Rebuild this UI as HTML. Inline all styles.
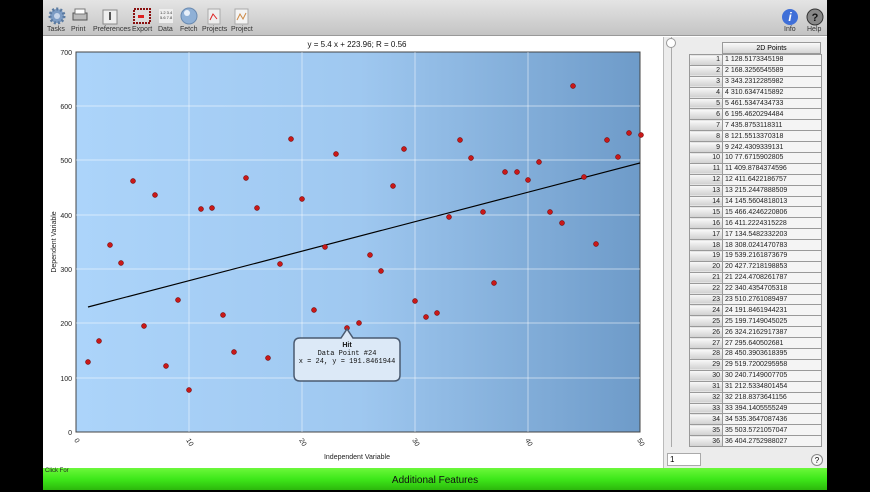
<!DOCTYPE html>
<html><head><meta charset="utf-8"><style>
*{margin:0;padding:0;box-sizing:border-box}
body{width:870px;height:490px;background:#000;position:relative;overflow:hidden;font-family:"Liberation Sans",sans-serif}
#win{position:absolute;left:43px;top:0;width:784px;height:490px;background:#fff}
#tb{position:absolute;left:0;top:0;width:784px;height:36px;background:linear-gradient(#e4e4e4,#c4c4c4);border-bottom:1px solid #999}
.ti{position:absolute;top:26px;font-size:7px;color:#333;text-align:center}
#side{position:absolute;top:37px;width:164px;height:431px;background:#ececec;border-left:1px solid #bbb}
#green{position:absolute;top:468px;width:784px;height:22px;background:linear-gradient(#6cf83a,#3ee81a 50%,#2cb80c)}
table{position:absolute;left:689px;top:54px;border-collapse:collapse;font-size:7px;color:#222;table-layout:fixed;width:132px}
td{height:10.9px;padding:0 2px;line-height:9px;white-space:nowrap;overflow:hidden}
td.i{width:33px;text-align:right;background:linear-gradient(#fafafa,#cfcfcf);border:1px solid #999;border-radius:2px}
td.v{width:99px;background:#f4f4f4;border:1px solid #999}
</style></head><body>
<div id="win">
<div id="tb">
<svg width="300" height="26" style="position:absolute;left:0;top:0">
<circle cx="14" cy="16" r="7" fill="#7d9cc4" stroke="#5b7aa0" stroke-width="3" stroke-dasharray="2 2"/><circle cx="14" cy="16" r="3" fill="#c8d6ea"/>
<rect x="30" y="13" width="14" height="7" fill="#bbb" stroke="#555"/><rect x="32" y="9" width="10" height="5" fill="#fff" stroke="#777"/>
<rect x="60" y="10" width="14" height="14" fill="#eee" stroke="#888"/><rect x="66" y="12" width="2" height="8" fill="#555"/>
<rect x="91" y="9" width="16" height="14" fill="#ddd" stroke="#8a1010" stroke-width="2" stroke-dasharray="2 1"/><rect x="95" y="15" width="6" height="3" fill="#d22"/>
<rect x="116" y="9" width="14" height="14" fill="#eee"/><text x="117" y="14" font-size="4" fill="#333">1.2 3.4</text><text x="117" y="19" font-size="4" fill="#333">5.6 7.8</text>
<circle cx="146" cy="16" r="8" fill="#8fb0d6" stroke="#6a8ab0"/><circle cx="144" cy="13" r="3" fill="#e8f0fa"/>
<rect x="165" y="9" width="12" height="15" fill="#eee" stroke="#aaa"/><path d="M167 20 L170 14 L174 19" stroke="#d22" fill="none"/>
<rect x="192" y="9" width="13" height="15" fill="#f4f4f4" stroke="#aaa"/><path d="M194 20 L197 14 L200 19 L203 13" stroke="#c84" fill="none"/>
</svg>
<div class="ti" style="left:4px">Tasks</div><div class="ti" style="left:28px">Print</div><div class="ti" style="left:50px">Preferences</div><div class="ti" style="left:89px">Export</div><div class="ti" style="left:115px">Data</div><div class="ti" style="left:137px">Fetch</div><div class="ti" style="left:159px">Projects</div><div class="ti" style="left:188px">Project</div>
<svg width="50" height="26" style="position:absolute;left:736px;top:0"><circle cx="11" cy="17" r="8" fill="#3f6fd8"/><text x="11" y="21" font-size="12" font-style="italic" font-weight="bold" fill="#fff" text-anchor="middle">i</text><circle cx="36" cy="17" r="8" fill="#888" stroke="#333"/><text x="36" y="21" font-size="11" font-weight="bold" fill="#111" text-anchor="middle">?</text></svg>
<div class="ti" style="left:741px">Info</div><div class="ti" style="left:764px">Help</div>
</div>
</div>
<svg width="660" height="468" style="position:absolute;left:0;top:0;font-family:'Liberation Sans',sans-serif">
<defs><linearGradient id="g" x1="0" x2="1"><stop offset="0" stop-color="#acd4fa"/><stop offset="0.5" stop-color="#9fc8f0"/><stop offset="1" stop-color="#6e9bc9"/></linearGradient></defs>
<rect x="76" y="52" width="564" height="380" fill="url(#g)" stroke="#444"/>
<g stroke="#fff" stroke-opacity="0.7" stroke-width="0.7">
<line x1="189" y1="52" x2="189" y2="432"/><line x1="302" y1="52" x2="302" y2="432"/><line x1="415" y1="52" x2="415" y2="432"/><line x1="528" y1="52" x2="528" y2="432"/>
<line x1="76" y1="106" x2="640" y2="106"/><line x1="76" y1="160" x2="640" y2="160"/><line x1="76" y1="215" x2="640" y2="215"/><line x1="76" y1="269" x2="640" y2="269"/><line x1="76" y1="323" x2="640" y2="323"/><line x1="76" y1="378" x2="640" y2="378"/></g>
<text x="357" y="47" font-size="8" text-anchor="middle" fill="#111">y = 5.4 x + 223.96; R = 0.56</text>
<g font-size="7" fill="#222" text-anchor="end"><text x="72" y="55">700</text><text x="72" y="109">600</text><text x="72" y="163">500</text><text x="72" y="218">400</text><text x="72" y="272">300</text><text x="72" y="326">200</text><text x="72" y="381">100</text><text x="72" y="435">0</text></g>
<g font-size="7" fill="#222"><text transform="translate(74,440) rotate(60)">0</text><text transform="translate(186,440) rotate(60)">10</text><text transform="translate(299,440) rotate(60)">20</text><text transform="translate(412,440) rotate(60)">30</text><text transform="translate(525,440) rotate(60)">40</text><text transform="translate(637,440) rotate(60)">50</text></g>
<text x="357" y="459" font-size="7" text-anchor="middle" fill="#222">Independent Variable</text>
<text transform="translate(56,242) rotate(-90)" font-size="7" text-anchor="middle" fill="#222">Dependent Variable</text>
<line x1="88" y1="307" x2="640" y2="163" stroke="#000" stroke-width="1.2"/>
<g fill="#c81818" stroke="#600" stroke-width="0.5">
<circle cx="88" cy="362" r="2.5"/><circle cx="99" cy="341" r="2.5"/><circle cx="110" cy="245" r="2.5"/><circle cx="121" cy="263" r="2.5"/><circle cx="133" cy="181" r="2.5"/><circle cx="144" cy="326" r="2.5"/><circle cx="155" cy="195" r="2.5"/><circle cx="166" cy="366" r="2.5"/><circle cx="178" cy="300" r="2.5"/><circle cx="189" cy="390" r="2.5"/><circle cx="201" cy="209" r="2.5"/><circle cx="212" cy="208" r="2.5"/><circle cx="223" cy="315" r="2.5"/><circle cx="234" cy="352" r="2.5"/><circle cx="246" cy="178" r="2.5"/><circle cx="257" cy="208" r="2.5"/><circle cx="268" cy="358" r="2.5"/><circle cx="280" cy="264" r="2.5"/><circle cx="291" cy="139" r="2.5"/><circle cx="302" cy="199" r="2.5"/><circle cx="314" cy="310" r="2.5"/><circle cx="325" cy="247" r="2.5"/><circle cx="336" cy="154" r="2.5"/><circle cx="347" cy="328" r="2.5"/><circle cx="359" cy="323" r="2.5"/><circle cx="370" cy="255" r="2.5"/><circle cx="381" cy="271" r="2.5"/><circle cx="393" cy="186" r="2.5"/><circle cx="404" cy="149" r="2.5"/><circle cx="415" cy="301" r="2.5"/><circle cx="426" cy="317" r="2.5"/><circle cx="437" cy="313" r="2.5"/><circle cx="449" cy="217" r="2.5"/><circle cx="460" cy="140" r="2.5"/><circle cx="471" cy="158" r="2.5"/><circle cx="483" cy="212" r="2.5"/><circle cx="494" cy="283" r="2.5"/><circle cx="505" cy="172" r="2.5"/><circle cx="517" cy="172" r="2.5"/><circle cx="528" cy="180" r="2.5"/><circle cx="539" cy="162" r="2.5"/><circle cx="550" cy="212" r="2.5"/><circle cx="562" cy="223" r="2.5"/><circle cx="573" cy="86" r="2.5"/><circle cx="584" cy="177" r="2.5"/><circle cx="596" cy="244" r="2.5"/><circle cx="607" cy="140" r="2.5"/><circle cx="618" cy="157" r="2.5"/><circle cx="629" cy="133" r="2.5"/><circle cx="641" cy="135" r="2.5"/></g>
<path d="M300 338 H341 L347 329 L353 338 H394 Q400 338 400 344 V375 Q400 381 394 381 H300 Q294 381 294 375 V344 Q294 338 300 338 Z" fill="#dce9f7" stroke="#4a5a70" stroke-width="1.5"/>
<g font-size="7" text-anchor="middle" fill="#111"><text x="347" y="347" font-weight="bold">Hit</text><text x="347" y="355" font-family="Liberation Mono">Data Point #24</text><text x="347" y="363" font-family="Liberation Mono">x = 24, y = 191.8461944</text></g>
</svg>
<div id="side" style="left:663px"></div>
<div style="position:absolute;left:671px;top:37px;width:1px;height:410px;background:#aaa"></div>
<div style="position:absolute;left:666px;top:38px;width:10px;height:10px;border-radius:50%;background:#fff;border:1px solid #999"></div>
<div style="position:absolute;left:722px;top:42px;width:99px;height:12px;background:linear-gradient(#fafafa,#d4d4d4);border:1px solid #999;font-size:7px;text-align:center;line-height:11px">2D Points</div>
<table>
<tr><td class="i">1</td><td class="v">1 128.5173345198</td></tr><tr><td class="i">2</td><td class="v">2 168.3256545589</td></tr><tr><td class="i">3</td><td class="v">3 343.2312285982</td></tr><tr><td class="i">4</td><td class="v">4 310.6347415892</td></tr><tr><td class="i">5</td><td class="v">5 461.5347434733</td></tr><tr><td class="i">6</td><td class="v">6 195.4620294484</td></tr><tr><td class="i">7</td><td class="v">7 435.8753118311</td></tr><tr><td class="i">8</td><td class="v">8 121.5513370318</td></tr><tr><td class="i">9</td><td class="v">9 242.4309339131</td></tr><tr><td class="i">10</td><td class="v">10 77.6715902805</td></tr><tr><td class="i">11</td><td class="v">11 409.8784374596</td></tr><tr><td class="i">12</td><td class="v">12 411.6422186757</td></tr><tr><td class="i">13</td><td class="v">13 215.2447888509</td></tr><tr><td class="i">14</td><td class="v">14 145.5604818013</td></tr><tr><td class="i">15</td><td class="v">15 466.4246220806</td></tr><tr><td class="i">16</td><td class="v">16 411.2224315228</td></tr><tr><td class="i">17</td><td class="v">17 134.5482332203</td></tr><tr><td class="i">18</td><td class="v">18 308.0241470783</td></tr><tr><td class="i">19</td><td class="v">19 539.2161873679</td></tr><tr><td class="i">20</td><td class="v">20 427.7218198853</td></tr><tr><td class="i">21</td><td class="v">21 224.4708261787</td></tr><tr><td class="i">22</td><td class="v">22 340.4354705318</td></tr><tr><td class="i">23</td><td class="v">23 510.2761089497</td></tr><tr><td class="i">24</td><td class="v">24 191.8461944231</td></tr><tr><td class="i">25</td><td class="v">25 199.7149045025</td></tr><tr><td class="i">26</td><td class="v">26 324.2162917387</td></tr><tr><td class="i">27</td><td class="v">27 295.640502681</td></tr><tr><td class="i">28</td><td class="v">28 450.3903618395</td></tr><tr><td class="i">29</td><td class="v">29 519.7200295958</td></tr><tr><td class="i">30</td><td class="v">30 240.7149007705</td></tr><tr><td class="i">31</td><td class="v">31 212.5334801454</td></tr><tr><td class="i">32</td><td class="v">32 218.8373641156</td></tr><tr><td class="i">33</td><td class="v">33 394.1405555249</td></tr><tr><td class="i">34</td><td class="v">34 535.3647087436</td></tr><tr><td class="i">35</td><td class="v">35 503.5721057047</td></tr><tr><td class="i">36</td><td class="v">36 404.2752988027</td></tr>
</table>
<div style="position:absolute;left:667px;top:453px;width:34px;height:13px;background:#fff;border:1px solid #aaa;font-size:8px;padding-left:2px;line-height:12px">1</div>
<div style="position:absolute;left:811px;top:454px;width:12px;height:12px;border-radius:50%;background:#f8f8f8;border:1px solid #888;font-size:8px;text-align:center;line-height:11px">?</div>
<div id="green" style="left:43px"><div style="position:absolute;left:2px;top:0;font-size:6px;color:#222">Click For</div><div style="text-align:center;font-size:10px;color:#111;line-height:22px;padding-top:2px">Additional Features</div></div>
</body></html>
